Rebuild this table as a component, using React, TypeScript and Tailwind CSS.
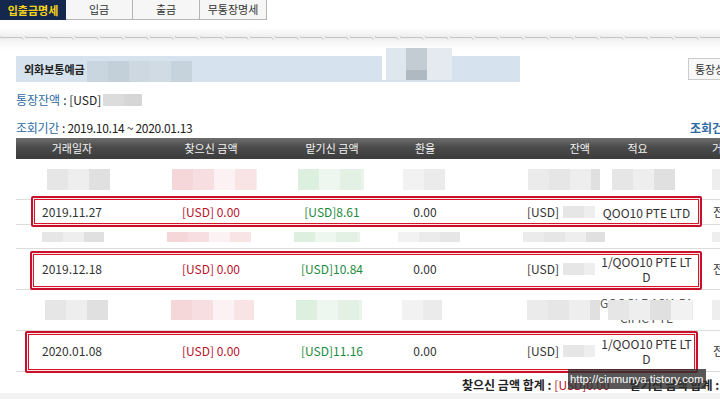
const grey = ["#e6e6e6", "#eeeeee", "#e0e0e0", "#f2f2f2", "#ebebeb"];
const pink = ["#fbeced", "#f5d7d9", "#f7dfe1", "#fdf2f3", "#f8e4e5"];
const green = ["#e9f4ea", "#d6ecd9", "#ddf0df", "#eef7ef", "#e2f1e4"];
const bluish = ["#c9d5df", "#c3cfd9", "#cdd8e1", "#d0dbe4", "#c6d2dc"];

const cols = "grid grid-cols-[112px_166px_76px_110px_120px_93px_1fr]";

function Mosaic({ colors, w, h, offset = 0 }: { colors: string[]; w: number; h: number; offset?: number }) {
  const n = Math.ceil(w / 21);
  return (
    <div className="flex shrink-0 overflow-hidden blur-[0.5px]" style={{ width: w, height: h }}>
      {Array.from({ length: n }).map((_, i) => (
        <div key={i} className="h-full w-[21px] shrink-0" style={{ background: colors[(i + offset) % colors.length] }} />
      ))}
    </div>
  );
}

function Separator() {
  return (
    <div className="relative mt-[8px] h-[22px] bg-[linear-gradient(to_bottom,#ffffff_0%,#f0f0f0_35%,#eeeeee_45%,#f6f6f6_65%,#ffffff_100%)]">
      <svg className="absolute left-0 top-[7px]" width="720" height="5">
        <defs>
          <pattern id="chain" width="25" height="5" patternUnits="userSpaceOnUse">
            <path d="M1 2.5 H21 M21 2.5 q2 0 2 2 M1 2.5 q-1 0 -1 -1.5" stroke="#c4c4c4" strokeWidth="1" fill="none" />
          </pattern>
        </defs>
        <rect width="720" height="5" fill="url(#chain)" />
      </svg>
    </div>
  );
}

function BlurRow({ h, bh, cells, memo }: { h: string; bh: number; cells: number[][]; memo?: [string, string] }) {
  const tones = [grey, pink, green, grey, grey, grey, grey];
  return (
    <div className={`${cols} ${h} items-center border-b border-[#dcdcdc]`}>
      {cells.map(([pl, w], i) => (
        <div key={i} className="relative flex items-center" style={{ paddingLeft: pl }}>
          {i === 5 && memo && (
            <div className="absolute left-0 w-[93px] text-center text-[12px] leading-[15px] text-[#555] whitespace-nowrap overflow-hidden">
              <div>{memo[0]}</div>
              <div>{memo[1]}</div>
            </div>
          )}
          {w > 0 && (
            <div className="relative">
              <Mosaic colors={tones[i]} w={w} h={bh} offset={i} />
            </div>
          )}
        </div>
      ))}
    </div>
  );
}

function DataRow({ h, date, amount, memo }: { h: string; date: string; amount: string; memo: string[] }) {
  return (
    <div className={`${cols} ${h} items-center border-b border-[#dcdcdc] text-[12px] text-[#333]`}>
      <div className="text-center">{date}</div>
      <div className="text-center text-[#b8122a]">[USD] 0.00</div>
      <div className="text-center text-[#1d8a3c]">[USD]{amount}</div>
      <div className="text-center">0.00</div>
      <div className="flex items-center gap-[4px] pl-[47px]">
        <span>[USD]</span>
        <Mosaic colors={grey} w={32} h={12} />
      </div>
      <div className="text-center leading-[15px]">
        {memo.map((m) => (
          <div key={m}>{m}</div>
        ))}
      </div>
      <div className="pl-[20px]">전</div>
    </div>
  );
}

const mark =
  "absolute rounded-[2px] border-2 border-[#c8102a] shadow-[inset_0_0_0_1px_#fbe9ea,inset_0_0_0_2px_#d8142c]";

export default function App() {
  return (
    <div className="relative h-[399px] w-[720px] overflow-hidden bg-white font-['Noto_Sans_CJK_KR',sans-serif] text-[#222]">
      <div className="flex h-[20px] text-[11px]">
        <div className="flex w-[66px] items-center justify-center bg-[#13284c] font-bold text-[#f7d417]">입출금명세</div>
        {["입금", "출금", "무통장명세"].map((t) => (
          <div key={t} className="flex w-[67px] items-center justify-center border-b border-r border-[#b5b5b5] bg-[#f6f6f6] text-[#333]">
            {t}
          </div>
        ))}
      </div>

      <Separator />

      <div className="mt-[6px] flex w-[900px] items-start">
        <div className="relative ml-[16px] flex h-[26px] w-[504px] shrink-0 items-center bg-[#d6e3ee] pl-[8px]">
          <span className="text-[11px] font-bold text-[#222]">외화보통예금</span>
          <div className="ml-[2px] mt-[5px]">
            <Mosaic colors={bluish} w={105} h={21} />
          </div>
          <div className="absolute left-[366px] top-[-8px] flex h-[32px]">
            <div className="w-[4px] bg-white" />
            <div className="w-[20px] bg-[#dfe7ee] blur-[0.5px]" />
            <div className="flex w-[21px] flex-col blur-[0.5px]">
              <div className="h-[22px] bg-[#c3ccd3]" />
              <div className="h-[10px] bg-[#aeb9c1]" />
            </div>
            <div className="w-[25px] bg-[#e4eaf0] blur-[0.5px]" />
          </div>
        </div>
        <div className="ml-[168px] mt-[2px] flex h-[22px] shrink-0 items-center whitespace-nowrap border border-[#cccccc] bg-[#f8f8f8] px-[6px] text-[11px] text-[#333]">
          통장상세
        </div>
      </div>

      <div className="ml-[16px] mt-[11px] flex h-[14px] items-center text-[12px]">
        <span className="text-[#2d6aa3]">통장잔액</span>
        <span className="ml-[3px]">: [USD]</span>
        <div className="ml-[2px]">
          <Mosaic colors={["#dcdcdc", "#d6d6d6"]} w={39} h={12} />
        </div>
      </div>

      <div className="ml-[16px] mt-[12px] grid h-[14px] grid-cols-[674px_auto] items-center text-[12px]">
        <div className="tracking-[-0.3px]">
          <span className="text-[#2d6aa3]">조회기간</span>
          <span className="ml-[3px]">: 2019.10.14 ~ 2020.01.13</span>
        </div>
        <div className="whitespace-nowrap font-bold text-[#2d6aa3]">조회건수</div>
      </div>

      <div className="relative ml-[16px] mt-[5px] w-[900px]">
        <div className={`${cols} h-[21px] items-center bg-[linear-gradient(to_bottom,#6e6e6e,#4a4a4a_45%,#3c3c3c)] text-[11px] text-[#f4f4f4]`}>
          <div className="text-center">거래일자</div>
          <div className="text-center">찾으신 금액</div>
          <div className="text-center">맡기신 금액</div>
          <div className="text-center">환율</div>
          <div className="pr-[10px] text-right">잔액</div>
          <div className="pr-[18px] text-center">적요</div>
          <div className="pl-[19px]">거래점</div>
        </div>

        <BlurRow
          h="h-[41px]"
          bh={21}
          cells={[[31, 63], [44, 85], [4, 66], [33, 42], [48, 72], [12, 63], [19, 30]]}
          memo={["", "CIFIC PTE"]}
        />
        <DataRow h="h-[25px]" date="2019.11.27" amount="8.61" memo={["QOO10 PTE LTD"]} />
        <BlurRow h="h-[24px]" bh={10} cells={[[26, 62], [39, 84], [0, 66], [28, 62], [43, 82], [0, 0], [19, 30]]} />
        <DataRow h="h-[41px]" date="2019.12.18" amount="10.84" memo={["1/QOO10 PTE LT", "D"]} />
        <BlurRow
          h="h-[41px]"
          bh={20}
          cells={[[29, 63], [43, 83], [2, 66], [32, 40], [47, 73], [8, 85], [19, 30]]}
          memo={["GOOGLE ASIA PA", "CIFIC PTE"]}
        />
        <DataRow h="h-[41px]" date="2020.01.08" amount="11.16" memo={["1/QOO10 PTE LT", "D"]} />

        <div className={`${mark} left-[15px] top-[58px] h-[31px] w-[671px]`} />
        <div className={`${mark} left-[14px] top-[113px] h-[39px] w-[672px]`} />
        <div className={`${mark} left-[9px] top-[193px] h-[42px] w-[673px]`} />
      </div>

      <div className="mt-[6px] flex h-[14px] items-center whitespace-nowrap pl-[462px] text-[12px] font-bold">
        <span>찾으신 금액 합계 : </span>
        <span className="ml-[3px] font-normal text-[#b8122a]">[USD]0.00</span>
        <span className="ml-[20px]">맡기신 금액 합계 : </span>
        <span className="ml-[3px] font-normal text-[#1d8a3c]">[USD]30.61</span>
      </div>
      <div className="mt-[1px] h-[6px] bg-[#f3f3f3]" />

      <div className="absolute left-[568px] top-[369px] h-[20px] bg-[#2e2e2e]/80 px-[2px] font-['Liberation_Sans',sans-serif] text-[11.3px] leading-[20px] text-white">
        http://cinmunya.tistory.com
      </div>
    </div>
  );
}
